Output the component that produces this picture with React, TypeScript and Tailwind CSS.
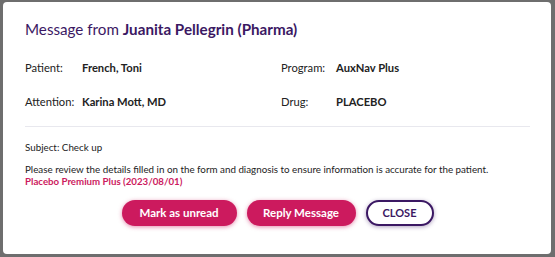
import React from "react";

const font = { fontFamily: 'Lato, "Noto Sans", sans-serif' };

function Row({ l1, v1, l2, v2 }: { l1: string; v1: string; l2: string; v2: string }) {
  return (
    <div className="flex text-[11.2px] leading-[16px] text-[#222]">
      <div className="flex w-[256px]">
        <span className="w-[57px]">{l1}</span>
        <span className="font-bold">{v1}</span>
      </div>
      <div className="flex">
        <span className="w-[55px]">{l2}</span>
        <span className="font-bold">{v2}</span>
      </div>
    </div>
  );
}

export default function App() {
  return (
    <div className="w-[555px] h-[257px] bg-[#6e6e6e] pt-[2px] pl-[3px] overflow-hidden" style={font}>
      <div className="w-[548px] h-[252px] bg-white rounded-[4px] pl-[22px] pr-[21px] pt-[15px]">
        <h1 className="text-[15.2px] leading-[24px] text-[#3b1863]">
          Message from <span className="font-bold">Juanita Pellegrin (Pharma)</span>
        </h1>
        <div className="mt-[19px] flex flex-col gap-[18px]">
          <Row l1="Patient:" v1="French, Toni" l2="Program:" v2="AuxNav Plus" />
          <Row l1="Attention:" v1="Karina Mott, MD" l2="Drug:" v2="PLACEBO" />
        </div>
        <div className="mt-[16px] border-t border-[#e8e8ee]" />
        <div className="mt-[13px] text-[9.8px] leading-[14px] text-[#222]">Subject: Check up</div>
        <div className="mt-[9px] text-[9.8px] leading-[12px] text-[#222]">
          Please review the details filled in on the form and diagnosis to ensure information is accurate for the patient.
        </div>
        <div className="text-[9.7px] leading-[12px] font-bold text-[#cc1a5e]">Placebo Premium Plus (2023/08/01)</div>
        <div className="mt-[13px] flex justify-center gap-[10px]">
          <button className="h-[26px] w-[115px] rounded-full bg-[#cc1a5e] text-white text-[11.5px] font-bold shadow-[0_1px_4px_rgba(204,26,94,0.5)]">
            Mark as unread
          </button>
          <button className="h-[26px] w-[109px] rounded-full bg-[#cc1a5e] text-white text-[11.5px] font-bold shadow-[0_1px_4px_rgba(204,26,94,0.5)]">
            Reply Message
          </button>
          <button className="h-[26px] w-[68px] rounded-full bg-white border-[2px] border-[#3b1863] text-[#3b1863] text-[11px] font-bold shadow-[0_1px_4px_rgba(59,24,99,0.4)]">
            CLOSE
          </button>
        </div>
      </div>
    </div>
  );
}
